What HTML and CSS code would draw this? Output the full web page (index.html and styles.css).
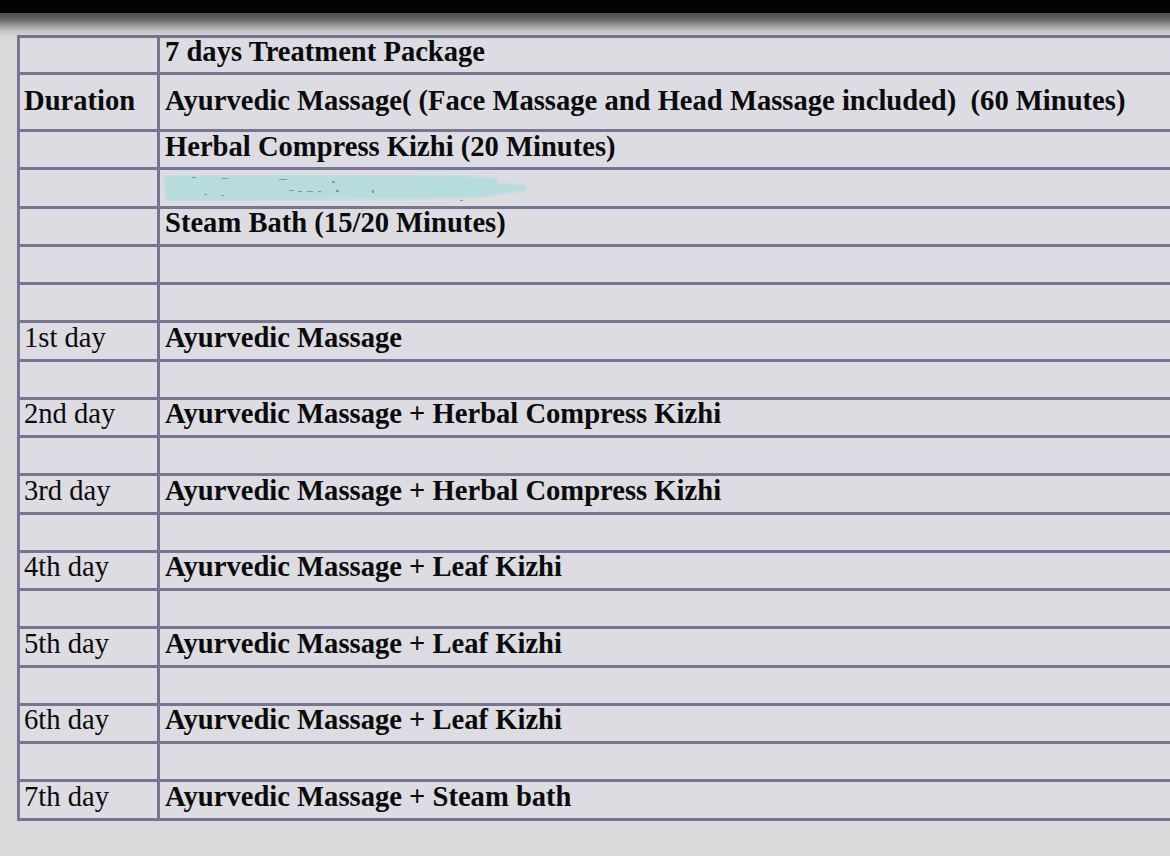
FILE: index.html
```html
<!DOCTYPE html>
<html lang="en">
<head>
<meta charset="utf-8">
<title>7 days Treatment Package</title>
<link rel="stylesheet" href="styles.css">
</head>
<body>
<div class="topbar"></div>
<main class="sheet">
  <table class="package">
    <colgroup><col class="c1"><col class="c2"></colgroup>
    <tbody>
      <tr class="r-head"><td></td><td class="b">7 days Treatment Package</td></tr>
      <tr class="r-tall"><td class="b">Duration</td><td class="b">Ayurvedic Massage( (Face Massage and Head Massage included)&nbsp; (60 Minutes)</td></tr>
      <tr><td></td><td class="b">Herbal Compress Kizhi (20 Minutes)</td></tr>
      <tr><td></td><td class="smudge-cell">
        <svg class="smudge" width="372" height="30" viewBox="0 0 372 30" aria-hidden="true">
          <defs><filter id="blur" x="-5%" y="-30%" width="110%" height="160%"><feGaussianBlur stdDeviation="1.2"/></filter></defs>
          <path d="M2 3 L140 2 L300 3 L335 5 L336 10 L362 12 L366 17 L340 21 L322 24 L250 26 L120 27 L4 28 Z" fill="#b6dcdc" filter="url(#blur)"/>
          <g fill="#7f9a9a">
            <rect x="30" y="4" width="4" height="1"/><rect x="60" y="5" width="6" height="1"/>
            <rect x="117" y="6" width="8" height="1"/><rect x="170" y="8" width="3" height="2"/>
            <rect x="127" y="17" width="5" height="1"/><rect x="136" y="18" width="4" height="1"/>
            <rect x="145" y="18" width="6" height="1"/><rect x="156" y="18" width="3" height="1"/>
            <rect x="174" y="17" width="3" height="2"/><rect x="210" y="17" width="2" height="3"/>
            <rect x="42" y="21" width="3" height="1"/><rect x="60" y="22" width="2" height="1"/>
            <rect x="298" y="27" width="3" height="1"/>
          </g>
        </svg>
      </td></tr>
      <tr><td></td><td class="b">Steam Bath (15/20 Minutes)</td></tr>
      <tr><td></td><td></td></tr>
      <tr><td></td><td></td></tr>
      <tr><td>1st day</td><td class="b">Ayurvedic Massage</td></tr>
      <tr><td></td><td></td></tr>
      <tr><td>2nd day</td><td class="b">Ayurvedic Massage + Herbal Compress Kizhi</td></tr>
      <tr><td></td><td></td></tr>
      <tr><td>3rd day</td><td class="b">Ayurvedic Massage + Herbal Compress Kizhi</td></tr>
      <tr><td></td><td></td></tr>
      <tr><td>4th day</td><td class="b">Ayurvedic Massage + Leaf Kizhi</td></tr>
      <tr><td></td><td></td></tr>
      <tr><td>5th day</td><td class="b">Ayurvedic Massage + Leaf Kizhi</td></tr>
      <tr><td></td><td></td></tr>
      <tr><td>6th day</td><td class="b">Ayurvedic Massage + Leaf Kizhi</td></tr>
      <tr><td></td><td></td></tr>
      <tr><td>7th day</td><td class="b">Ayurvedic Massage + Steam bath</td></tr>
    </tbody>
  </table>
</main>
</body>
</html>
```

FILE: styles.css
```css
html, body {
  margin: 0;
  padding: 0;
}

body {
  background: #d9d9db;
  overflow: hidden;
  width: 1170px;
  height: 856px;
  font-family: "Liberation Serif", "Times New Roman", serif;
  color: #0b0b0b;
}

.topbar {
  height: 13px;
  margin: 0 -20px;
  background: #030303;
  box-shadow: 0 7px 14px 4px rgba(0, 0, 0, 0.7);
  position: relative;
  z-index: 1;
}

.sheet {
  padding: 22px 0 0 17px;
}

.package {
  width: 1170px;
  table-layout: fixed;
  border-collapse: separate;
  border-spacing: 0;
  border-top: 3px solid #77758f;
  border-left: 3px solid #77758f;
  background: #dcdce2;
}

.c1 { width: 140px; }

.package td {
  border-right: 3px solid #77758f;
  border-bottom: 3px solid #77758f;
  padding: 0 4px 6px 4px;
  font-size: 28.6px;
  line-height: 24px;
  vertical-align: middle;
  white-space: nowrap;
  box-sizing: border-box;
}

.package td + td {
  padding-left: 5px;
}

.package tr {
  height: 38.25px;
}

.package tr.r-head {
  height: 37px;
}

.package tr.r-tall {
  height: 57px;
}

.package tr.r-tall td {
  padding-bottom: 3px;
}

.b {
  font-weight: bold;
}

.package td.smudge-cell {
  line-height: 0;
  padding-bottom: 0;
}

.smudge {
  display: block;
  margin: 0 0 0 -3px;
}
```
